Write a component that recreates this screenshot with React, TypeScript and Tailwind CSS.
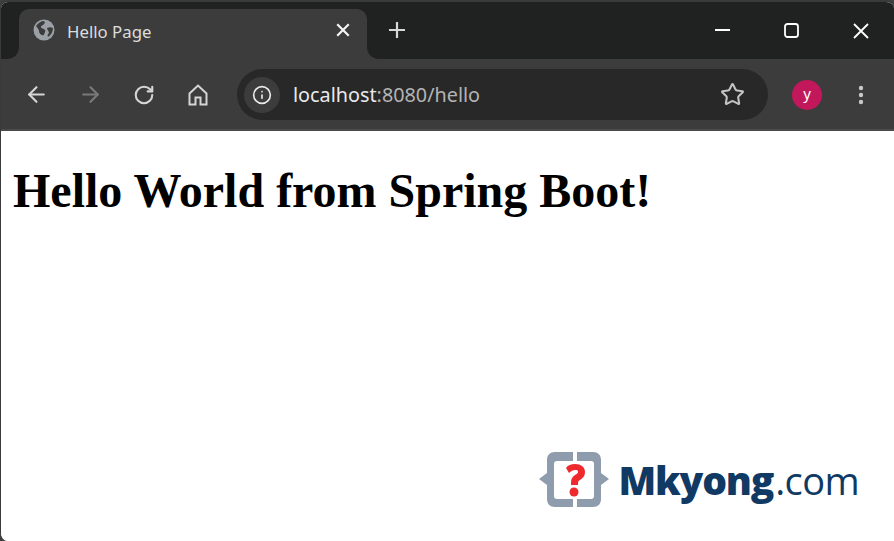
import { ArrowLeft, ArrowRight, Info, RotateCw, Star } from 'lucide-react';

const uiFont = { fontFamily: '"Noto Sans", "Open Sans", sans-serif' };

function Globe() {
  return (
    <svg width="22" height="22" viewBox="0 0 22 22" className="mt-[1px] shrink-0">
      <circle cx="11" cy="11" r="10.5" fill="#9aa0a6" />
      <path d="M3 7c2-3 5-5 8-5 1 1 1 2 0 3-1 2-3 1-3 3 0 2 3 1 4 3 1 2-1 3-1 5-3 1-5-2-5-4 0-2-2-3-3-5z" fill="#3c3c3c" />
      <path d="M14 9c2-1 4-1 6 0 0 4-2 7-5 9-1-2 0-3 1-4 0-2-2-3-2-5z" fill="#3c3c3c" />
    </svg>
  );
}

function TabFlare({ side }: { side: 'left' | 'right' }) {
  return (
    <svg
      width="12"
      height="12"
      viewBox="0 0 12 12"
      className={side === 'left' ? 'absolute bottom-0 -left-3' : 'absolute bottom-0 -right-3'}
    >
      {side === 'left' ? <path d="M12 0v12H0C7 12 12 7 12 0z" fill="#3c3c3c" /> : <path d="M0 0v12h12C5 12 0 7 0 0z" fill="#3c3c3c" />}
    </svg>
  );
}

function ToolbarButton({ children }: { children: React.ReactNode }) {
  return <div className="flex h-9 w-9 items-center justify-center">{children}</div>;
}

function Logo() {
  return (
    <div className="flex items-center">
      <svg width="70" height="55" viewBox="0 0 70 55" className="shrink-0">
        <path
          d="M34 0H16C11 0 8 3 8 8v13L0 27l8 6v14c0 5 3 8 8 8h18v-8H18c-2 0-3-1-3-3V12c0-2 1-3 3-3h16z"
          fill="#8f9cad"
        />
        <path
          d="M38 0h16c5 0 8 3 8 8v13l8 6-8 6v14c0 5-3 8-8 8H38v-8h14c2 0 3-1 3-3V12c0-2-1-3-3-3H38z"
          fill="#8f9cad"
        />
        <path
          d="M27 16c2-3 5-4 9-4 6 0 10 3 10 8 0 4-2 6-5 8-2 1-2 2-2 5h-7v-2c0-4 1-6 4-8 2-1 3-2 3-3 0-2-1-2-3-2-2 0-4 1-6 3z"
          fill="#ee2a2e"
        />
        <circle cx="35" cy="40" r="4.5" fill="#ee2a2e" />
      </svg>
      <div className="ml-[10px] text-[39px] leading-none tracking-[-0.6px] text-[#103a63]" style={{ fontFamily: '"Open Sans", sans-serif' }}>
        <span className="font-extrabold tracking-[-1.2px]">Mkyong</span>
        <span className="ml-[2px] text-[38px]">.com</span>
      </div>
    </div>
  );
}

export default function App() {
  return (
    <div className="relative h-[541px] w-[894px] overflow-hidden bg-[#3f3f3f]" style={uiFont}>
      <div className="flex h-full flex-col overflow-hidden rounded-t-lg rounded-bl-lg border-l border-t-2 border-[#3a3a3a] bg-white">
        {/* Tab strip */}
        <div className="flex h-[57px] shrink-0 items-end bg-[#202221] pl-[18px]">
          <div className="relative flex h-[50px] w-[348px] items-start rounded-t-[10px] bg-[#3c3c3c] pl-[14px] pr-3 pt-[9px]">
            <TabFlare side="left" />
            <TabFlare side="right" />
            <Globe />
            <span className="ml-[12px] text-[16.8px] leading-[28px] text-[#dcdcdc]">Hello Page</span>
            <svg width="14" height="14" viewBox="0 0 14 14" className="ml-auto mr-[5px] mt-[5px] text-[#f4f4f4]">
              <path d="M2 2l10 10M12 2L2 12" stroke="currentColor" strokeWidth="2.2" strokeLinecap="square" />
            </svg>
          </div>
          <div className="ml-[22px] flex h-[50px] items-start pt-[13px]">
            <svg width="16" height="16" viewBox="0 0 16 16" className="text-[#d8d8d8]">
              <path d="M8 0v16M0 8h16" stroke="currentColor" strokeWidth="2.2" />
            </svg>
          </div>
          <div className="ml-auto flex h-[57px] items-center pr-[25px] text-white">
            <svg width="15" height="2" viewBox="0 0 15 2" className="mr-[54px] mb-[1px]">
              <rect width="15" height="2" fill="currentColor" />
            </svg>
            <svg width="15" height="15" viewBox="0 0 15 15" className="mr-[54px]">
              <rect x="1" y="1" width="13" height="13" rx="2.5" fill="none" stroke="currentColor" strokeWidth="1.8" />
            </svg>
            <svg width="16" height="16" viewBox="0 0 16 16">
              <path d="M1 1l14 14M15 1L1 15" stroke="currentColor" strokeWidth="1.8" />
            </svg>
          </div>
        </div>

        {/* Toolbar */}
        <div className="flex h-[70px] shrink-0 items-center bg-[#3c3c3c] pl-[17px] pr-4">
          <div className="mt-[1px] flex items-center gap-[18px]">
            <ToolbarButton>
              <ArrowLeft className="text-[#d5d5d5]" size={25} strokeWidth={2} />
            </ToolbarButton>
            <ToolbarButton>
              <ArrowRight className="text-[#7a7a7a]" size={25} strokeWidth={2} />
            </ToolbarButton>
            <ToolbarButton>
              <RotateCw className="text-[#d5d5d5]" size={22} strokeWidth={2.3} />
            </ToolbarButton>
            <ToolbarButton>
              <svg width="20" height="22" viewBox="0 0 20 22" className="text-[#d5d5d5]">
                <path d="M1.5 9.5L10 1.5l8.5 8V20.5h-6v-7h-5v7h-6z" fill="none" stroke="currentColor" strokeWidth="2" strokeLinejoin="miter" />
              </svg>
            </ToolbarButton>
          </div>
          <div className="ml-[21px] flex h-[51px] w-[531px] items-center rounded-full bg-[#282828] pl-[7px] pr-[23px]">
            <div className="mt-[1px] flex h-9 w-9 items-center justify-center rounded-full bg-[#3c3c3c]">
              <Info className="text-[#e8e8e8]" size={20} strokeWidth={2} />
            </div>
            <span className="ml-[13px] mt-[1px] text-[19.8px] text-[#e8eaed]">
              localhost<span className="text-[#b4b4b4]">:8080/hello</span>
            </span>
            <Star className="ml-auto mt-[1px] text-[#c4c4c4]" size={25} strokeWidth={2} />
          </div>
          <div className="ml-6 mt-[1px] flex h-[30px] w-[30px] items-center justify-center rounded-full bg-[#c2185b] pb-[3px] text-[15px] leading-none text-white">
            y
          </div>
          <svg width="6" height="20" viewBox="0 0 6 20" className="ml-[36px] mt-[1px] text-[#c8c8c8]">
            <circle cx="3" cy="3" r="2.2" fill="currentColor" />
            <circle cx="3" cy="10" r="2.2" fill="currentColor" />
            <circle cx="3" cy="17" r="2.2" fill="currentColor" />
          </svg>
        </div>
        <div className="h-[2px] shrink-0 bg-[#4a4a4a]" />

        {/* Page */}
        <div className="relative flex-1 bg-white pl-3 text-black" style={{ fontFamily: '"Liberation Serif", serif' }}>
          <h1 className="mt-[32px] text-[48px] font-bold leading-[55px]">Hello World from Spring Boot!</h1>
          <div className="absolute bottom-[34px] right-[35px]">
            <Logo />
          </div>
        </div>
      </div>
    </div>
  );
}
